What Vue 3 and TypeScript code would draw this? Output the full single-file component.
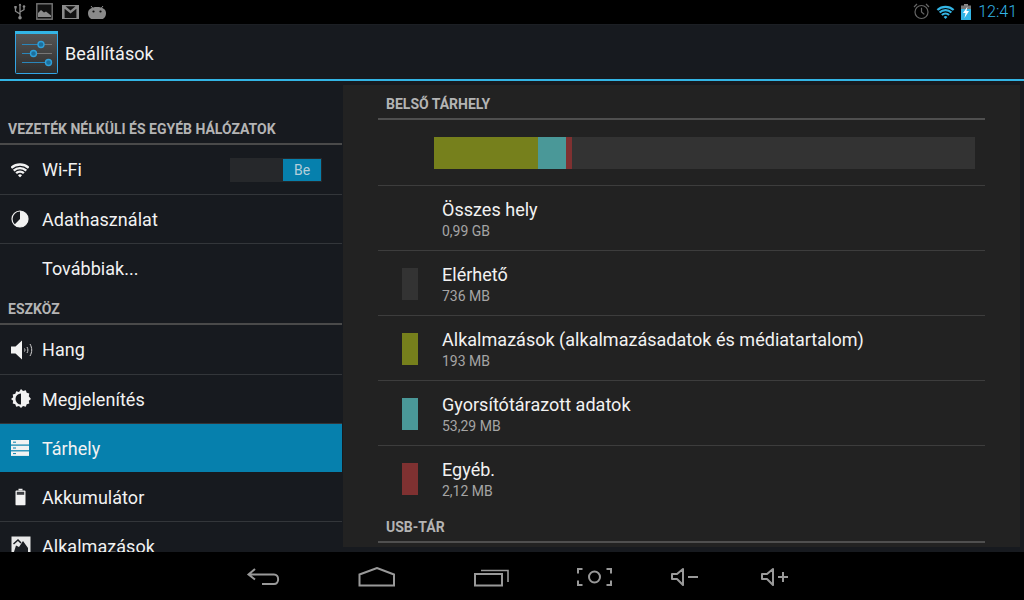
<template>
  <div class="screen">
    <div class="status-bar">
      <div class="status-left">
        <svg width="14" height="17" viewBox="0 0 14 17" fill="none" stroke="#8a8a8a" stroke-width="1.3">
          <path d="M7 1v13M2.500 5v3.200L7 11M11 4.500v2.200L7 9" />
          <circle cx="7" cy="14.800" r="1.800" fill="#8a8a8a" stroke="none" />
          <rect x="1.300" y="3" width="2.400" height="2.400" fill="#8a8a8a" stroke="none" />
          <circle cx="11" cy="3.600" r="1.300" fill="#8a8a8a" stroke="none" />
          <path d="M5.600 2.400 7 .4l1.400 2z" fill="#8a8a8a" stroke="none" />
        </svg>
        <svg width="17" height="17" viewBox="0 0 17 17">
          <rect x="0.800" y="0.800" width="15.400" height="15.400" fill="#111" stroke="#777" stroke-width="1.400" />
          <path d="M2 14V10l3-3 3 2.500 2-1 5 4V14z" fill="#8d8d8d" />
        </svg>
        <svg width="17" height="14" viewBox="0 0 17 14">
          <rect width="17" height="14" fill="#8a8a8a" />
          <path d="M2.600 13V3.800L8.500 8.600l5.900-4.800V13z" fill="#111" />
          <path d="M3.500 1.200 8.500 5.400l5-4.200z" fill="#111" />
        </svg>
        <svg width="18" height="14" viewBox="0 0 18 14">
          <path d="M3 1l1.800 2.200M15 1l-1.800 2.200" stroke="#8a8a8a" stroke-width="1" />
          <path d="M0 8c0-3.600 3.400-6 9-6s9 2.400 9 6c0 3.600-2 6-4 6H4c-2 0-4-2.400-4-6z" fill="#8a8a8a" />
          <circle cx="5.500" cy="6.500" r="1.100" fill="#111" />
          <circle cx="12.500" cy="6.500" r="1.100" fill="#111" />
        </svg>
      </div>
      <div class="status-right">
        <svg width="17" height="17" viewBox="0 0 17 17" fill="none" stroke="#666" stroke-width="1.200">
          <circle cx="8.500" cy="9" r="6.500" />
          <path d="M8.500 4.800V9l2.800 2.400M1 4l3-3M16 4l-3-3" />
        </svg>
        <svg width="19" height="14" viewBox="0 0 18 15" fill="none" stroke="#33b5e5" stroke-width="2.400">
          <path d="M.3 5.340A13 13 0 0 1 17.700 5.340M2.710 8.020A9.400 9.400 0 0 1 15.290 8.020M5.120 10.690A5.800 5.800 0 0 1 12.880 10.690" />
          <path d="M9 15 6.990 12.770A3 3 0 0 1 11.010 12.770z" fill="#33b5e5" stroke="none" />
        </svg>
        <svg width="10" height="16" viewBox="0 0 10 16">
          <rect x="3" y="0" width="4" height="2" fill="#8a8a8a" />
          <rect x="0" y="1.500" width="10" height="4" fill="#777" />
          <rect x="0" y="5" width="10" height="11" fill="#33b5e5" />
          <path d="M6.500 2.500 2 9h2.500L3.500 14 8 7H5.500z" fill="#fff" />
        </svg>
        <span class="clock">12:41</span>
      </div>
    </div>

    <div class="action-bar">
      <svg class="app-icon" width="44" height="44" viewBox="0 0 44 44">
        <defs>
          <linearGradient id="appbg" x1="0" y1="0" x2="0" y2="1">
            <stop offset="0" stop-color="#585858" />
            <stop offset="1" stop-color="#2c2c2c" />
          </linearGradient>
        </defs>
        <rect x="0.500" y="0.500" width="42" height="42" rx="1" fill="url(#appbg)" stroke="#33a5e5" />
        <rect x="0" y="0" width="43" height="3" fill="#33b5e5" />
        <path d="M7 13.500h30M7 22.500h30M7 31.500h30" stroke="#777" stroke-width="1" />
        <path d="M7 13.500h19M7 22.500h12M7 31.500h27" stroke="#2a86ba" stroke-width="1" />
        <circle cx="26" cy="13.500" r="3" fill="#1c6f9c" stroke="#2f9fd8" stroke-width="1.400" />
        <circle cx="18.500" cy="22.500" r="3" fill="#1c6f9c" stroke="#2f9fd8" stroke-width="1.400" />
        <circle cx="33.500" cy="31.500" r="3" fill="#1c6f9c" stroke="#2f9fd8" stroke-width="1.400" />
      </svg>
      <span class="title">Beállítások</span>
    </div>

    <div class="main">
      <div class="side">
        <div class="cat first">VEZETÉK NÉLKÜLI ÉS EGYÉB HÁLÓZATOK</div>
        <div class="item">
          <svg class="ico" width="18" height="15" viewBox="0 0 18 15" fill="none" stroke="#f2f2f2" stroke-width="2.400">
            <path d="M.3 5.340A13 13 0 0 1 17.700 5.340M2.710 8.020A9.400 9.400 0 0 1 15.290 8.020M5.120 10.690A5.800 5.800 0 0 1 12.880 10.690" />
            <path d="M9 15 6.990 12.770A3 3 0 0 1 11.010 12.770z" fill="#f2f2f2" stroke="none" />
          </svg>
          <span>Wi-Fi</span>
          <div class="toggle"><span class="toggle-on">Be</span></div>
        </div>
        <div class="item">
          <svg class="ico" width="18" height="18" viewBox="0 0 18 18">
            <circle cx="9" cy="9" r="8" fill="none" stroke="#f2f2f2" stroke-width="1.200" />
            <path d="M9 1 A8 8 0 1 1 3.340 14.660L9 9z" fill="#f2f2f2" />
          </svg>
          <span>Adathasználat</span>
        </div>
        <div class="item plain"><span>Továbbiak...</span></div>

        <div class="cat">ESZKÖZ</div>
        <div class="item">
          <svg class="ico" width="22" height="22" viewBox="0 0 22 22" fill="none" stroke="#cfcfcf" stroke-width="1">
            <path d="M0 7.500h4.500L11 1.500v19l-6.500-6H0z" fill="#f2f2f2" stroke="none" />
            <path d="M13.500 9.500c.6 1 .6 2 0 3" />
            <path d="M16 8c1.200 2 1.200 4 0 6" />
            <path d="M19 5c2.300 4 2.300 8 0 12" />
          </svg>
          <span>Hang</span>
        </div>
        <div class="item">
          <svg class="ico" width="20" height="20" viewBox="0 0 20 20">
            <path d="M10 0l2 2 2.800-.8.900 2.500 2.600.8-.5 2.800L20 10l-2.200 1.700.5 2.800-2.600.8-.9 2.500-2.800-.8-2 2-2-2-2.800.8-.9-2.500-2.600-.8.500-2.800L0 10l2.200-1.700L1.700 5.500l2.600-.8.900-2.500 2.800.8z" fill="#f2f2f2" />
            <path d="M10 4.500a5.500 5.500 0 0 0 0 11z" fill="#171a1f" />
          </svg>
          <span>Megjelenítés</span>
        </div>
        <div class="item active">
          <svg class="ico" width="18" height="16" viewBox="0 0 18 16">
            <rect y="0" width="18" height="4.500" fill="#f2f2f2" />
            <rect y="5.700" width="18" height="4.500" fill="#f2f2f2" />
            <rect y="11.400" width="18" height="4.500" fill="#f2f2f2" />
            <path d="M2 2.200h3M2 8h3M2 13.600h3" stroke="#0680ad" stroke-width="1" />
          </svg>
          <span>Tárhely</span>
        </div>
        <div class="item">
          <svg class="ico bat" width="11" height="17" viewBox="0 0 11 17">
            <rect x="3.500" y="0" width="4" height="2" fill="#f2f2f2" />
            <rect x="0.500" y="2" width="10" height="15" rx="1" fill="#f2f2f2" />
            <rect x="1.800" y="3.300" width="7.400" height="3" fill="#3c3e42" />
          </svg>
          <span>Akkumulátor</span>
        </div>
        <div class="item">
          <svg class="ico" width="20" height="20" viewBox="0 0 20 20">
            <rect x="0.500" y="0.500" width="19" height="19" fill="#e8e8e8" />
            <path d="M2.500 17.500 5 9.500l3 1.500 4-6 5 7v5.500z" fill="#1a1d22" />
            <path d="M2.500 8 7 4l3 3" stroke="#1a1d22" stroke-width="1.500" fill="none" />
          </svg>
          <span>Alkalmazások</span>
        </div>
      </div>

      <div class="panel">
        <div class="panel-inner">
          <div class="cat-r first">BELSŐ TÁRHELY</div>
          <div class="bar-row">
            <div class="bar">
              <div v-for="s in segments" :key="s.color" :style="{ width: s.width + 'px', background: s.color }"></div>
            </div>
          </div>
          <div v-for="row in rows" :key="row.name" class="stat">
            <div class="swatch" :style="{ background: row.color }"></div>
            <div>
              <div class="stat-name">{{ row.name }}</div>
              <div class="stat-val">{{ row.value }}</div>
            </div>
          </div>
          <div class="cat-r">USB-TÁR</div>
        </div>
      </div>
    </div>

    <div class="nav-bar">
      <svg width="36" height="20" viewBox="0 0 36 20" fill="none" stroke="#999" stroke-width="2">
        <path d="M9 2 2.500 7.500 9 12.500M3 7.500h25c5.500 0 5.500 9.500 0 9.500H16" />
      </svg>
      <svg width="38" height="20" viewBox="0 0 38 20" fill="none" stroke="#999" stroke-width="2">
        <path d="M1.500 7.500 19 1l17 6.500V18.500H1.500z" />
      </svg>
      <svg width="36" height="20" viewBox="0 0 36 20" fill="none" stroke="#999" stroke-width="2">
        <rect x="1" y="7" width="27" height="11.500" />
        <path d="M7 3.500h27V15" stroke-width="1.600" />
      </svg>
      <svg width="35" height="18" viewBox="0 0 35 18" fill="none" stroke="#999" stroke-width="2">
        <path d="M5.500 1H1v4.500M29.500 1H34v4.500M5.500 17H1v-4.500M29.500 17H34v-4.500" />
        <circle cx="17.500" cy="9" r="5.500" />
      </svg>
      <svg width="27" height="18" viewBox="0 0 27 18" fill="none" stroke="#999" stroke-width="2">
        <path d="M12 1 6 6H1v5h5l6 6z" stroke-linejoin="round" />
        <path d="M17 9h10" />
      </svg>
      <svg width="27" height="18" viewBox="0 0 27 18" fill="none" stroke="#999" stroke-width="2">
        <path d="M12 1 6 6H1v5h5l6 6z" stroke-linejoin="round" />
        <path d="M17 9h10M22 4v10" />
      </svg>
    </div>
  </div>
</template>

<script setup lang="ts">
interface StatRow {
  name: string
  value: string
  color: string
}

const segments = [
  { width: 104, color: '#76801c' },
  { width: 28, color: '#4a9898' },
  { width: 6, color: '#7f3131' },
  { width: 403, color: '#333333' },
]

const rows: StatRow[] = [
  { name: 'Összes hely', value: '0,99 GB', color: 'transparent' },
  { name: 'Elérhető', value: '736 MB', color: '#333333' },
  { name: 'Alkalmazások (alkalmazásadatok és médiatartalom)', value: '193 MB', color: '#76801c' },
  { name: 'Gyorsítótárazott adatok', value: '53,29 MB', color: '#4a9898' },
  { name: 'Egyéb.', value: '2,12 MB', color: '#7f3131' },
]
</script>

<style>
html,
body {
  margin: 0;
  background: #000;
}
</style>

<style scoped>
.screen {
  width: 1024px;
  height: 600px;
  display: flex;
  flex-direction: column;
  overflow: hidden;
  background: #000;
  font-family: Roboto, "Liberation Sans", sans-serif;
  color: #f2f2f2;
}

.status-bar {
  height: 25px;
  flex: none;
  background: #000;
  border-bottom: 1px solid #1c1f24;
  box-sizing: border-box;
  display: flex;
  justify-content: space-between;
  align-items: center;
  padding: 0 7px 1px 13px;
}

.status-left,
.status-right {
  display: flex;
  align-items: center;
}

.status-left {
  gap: 9px;
}

.status-right {
  gap: 6px;
}

.clock {
  font-size: 16px;
  font-weight: 300;
  color: #33b5e5;
  margin-left: 1px;
}

.action-bar {
  height: 56px;
  flex: none;
  box-sizing: border-box;
  background: #171a1f;
  display: flex;
  align-items: center;
  padding: 2px 0 0 15px;
  border-bottom: 2px solid #33b5e5;
}

.app-icon {
  flex: none;
}

.title {
  font-size: 18px;
  letter-spacing: 0.06px;
  margin-left: 6px;
}

.main {
  flex: 1;
  min-height: 0;
  display: flex;
  background: #171a1f;
}

.side {
  width: 342px;
  flex: none;
  overflow: hidden;
  padding-top: 39px;
  box-sizing: border-box;
}

.cat {
  height: 32px;
  box-sizing: border-box;
  border-bottom: 2px solid #4a4a4a;
  padding: 8px 0 0 8px;
  font-size: 14px;
  font-weight: 700;
  line-height: 16px;
  color: #b4b4b4;
}

.cat.first {
  height: 25px;
  padding-top: 1px;
}

.item {
  height: 49px;
  box-sizing: border-box;
  display: flex;
  align-items: center;
  font-size: 18px;
  letter-spacing: 0.04px;
  position: relative;
  border-bottom: 1px solid #33363a;
}

.cat + .item {
  height: 50px;
}

.item.plain {
  border-bottom-color: transparent;
}

.item.active {
  background: #0680ad;
  background-clip: padding-box;
  border-bottom-color: #171a1f;
}

.ico {
  position: absolute;
  left: 11px;
  top: 50%;
  transform: translateY(-50%);
}

.ico.bat {
  left: 15px;
}

.item > span {
  margin-left: 42px;
}

.toggle {
  position: absolute;
  left: 230px;
  top: 13px;
  width: 92px;
  height: 24px;
  background: #26282b;
  display: flex;
  justify-content: flex-end;
}

.toggle-on {
  width: 38px;
  height: 22px;
  margin: 1px;
  background: #0680ad;
  color: #b5cfdb;
  font-size: 14px;
  line-height: 22px;
  text-align: center;
}

.panel {
  width: 677px;
  flex: none;
  margin: 4px 0 5px 1px;
  background: #222222;
  overflow: hidden;
}

.panel-inner {
  padding: 0 35px;
}

.cat-r {
  height: 32px;
  box-sizing: border-box;
  padding: 8px 0 0 8px;
  font-size: 14px;
  font-weight: 700;
  line-height: 16px;
  color: #b4b4b4;
  border-bottom: 2px solid #4f4f4f;
}

.cat-r.first {
  height: 35px;
  padding-top: 11px;
}

.bar-row {
  height: 66px;
  box-sizing: border-box;
  padding: 17px 10px 0 56px;
  border-bottom: 1px solid #3d3d3d;
}

.bar {
  height: 32px;
  display: flex;
}

.stat {
  height: 65px;
  box-sizing: border-box;
  padding-top: 2px;
  display: flex;
  align-items: center;
  border-bottom: 1px solid #3d3d3d;
}

.stat:nth-last-child(2) {
  border-bottom-color: transparent;
}

.swatch {
  width: 16px;
  height: 32px;
  margin: 0 24px;
  flex: none;
}

.stat-name {
  font-size: 18px;
  letter-spacing: 0.02px;
  line-height: 24px;
}

.stat-val {
  font-size: 14px;
  line-height: 18px;
  color: #a5a5a5;
}

.nav-bar {
  height: 48px;
  flex: none;
  box-sizing: border-box;
  background: #000;
  display: flex;
  align-items: center;
  padding: 2px 0 0 246px;
}

.nav-bar svg:nth-child(1) { margin-right: 76px; }
.nav-bar svg:nth-child(2) { margin-right: 78px; }
.nav-bar svg:nth-child(3) { margin-right: 67px; }
.nav-bar svg:nth-child(4) { margin-right: 59px; }
.nav-bar svg:nth-child(5) { margin-right: 63px; }
</style>
